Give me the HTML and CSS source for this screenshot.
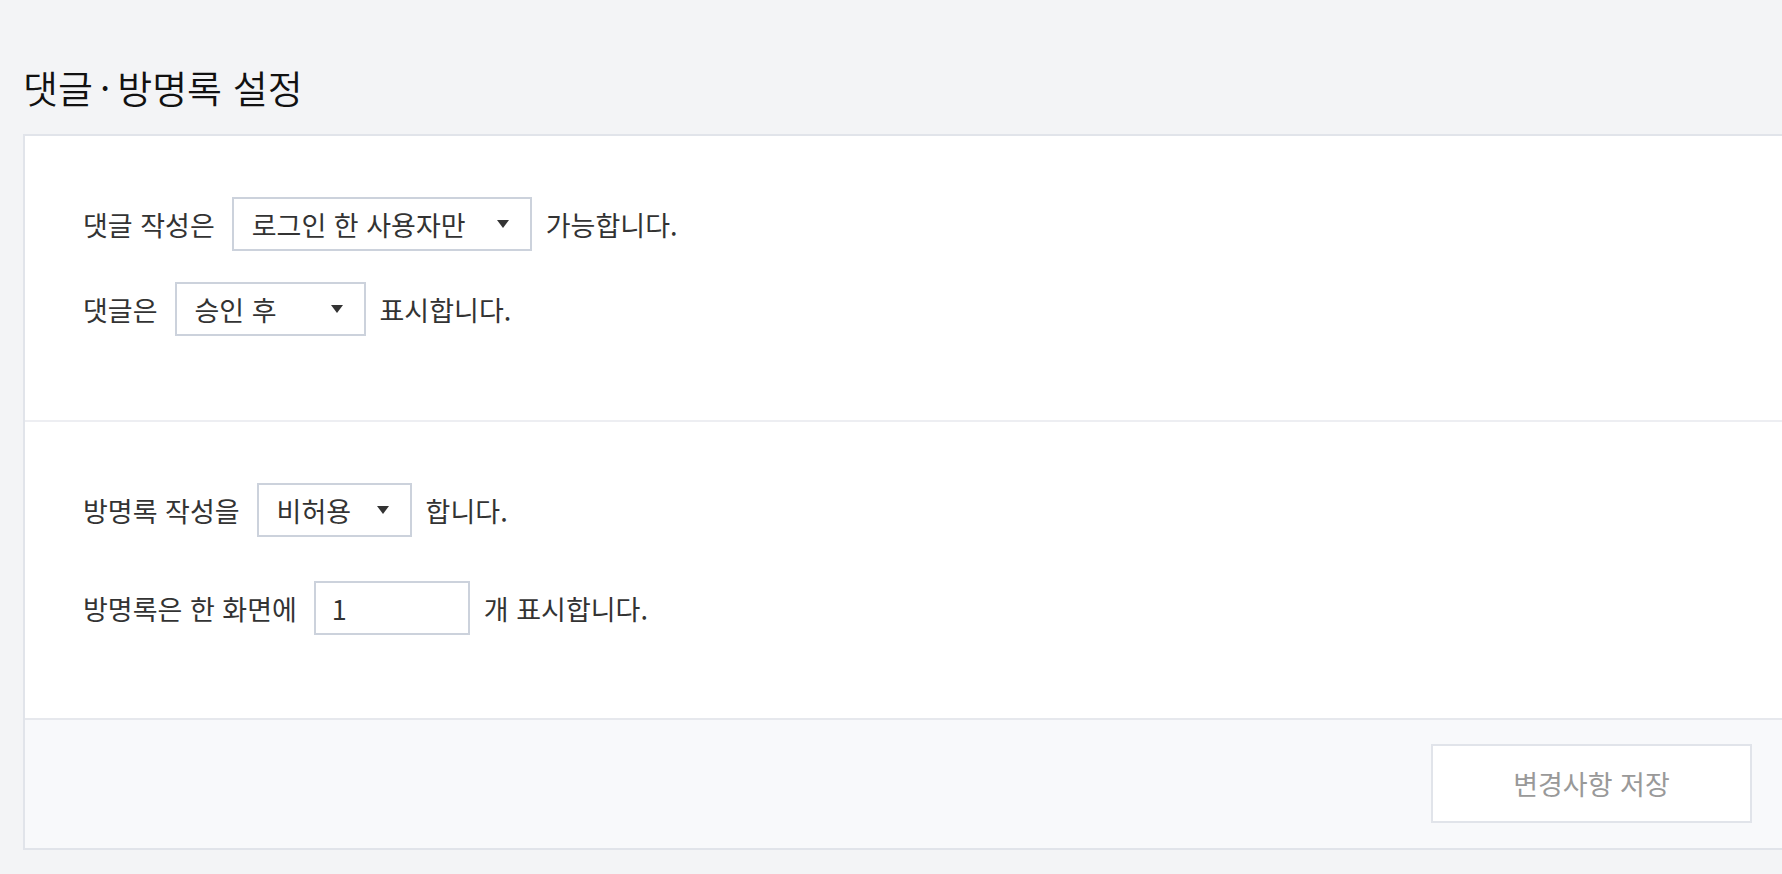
FILE: index.html
```html
<!DOCTYPE html>
<html lang="ko">
<head>
<meta charset="utf-8">
<title>댓글·방명록 설정</title>
<link rel="stylesheet" href="styles.css">
</head>
<body>
<div class="page">
  <h1 class="title">댓글<span class="dot">·</span>방명록 설정</h1>
  <div class="card">
    <div class="section section-first">
      <div class="row">
        <span class="label">댓글 작성은</span>
        <div class="select w300"><span>로그인 한 사용자만</span><i class="caret"></i></div>
        <span class="label">가능합니다.</span>
      </div>
      <div class="row row-gap1">
        <span class="label">댓글은</span>
        <div class="select w191"><span>승인 후</span><i class="caret"></i></div>
        <span class="label">표시합니다.</span>
      </div>
    </div>
    <div class="section section-second">
      <div class="row">
        <span class="label">방명록 작성을</span>
        <div class="select w155"><span>비허용</span><i class="caret"></i></div>
        <span class="label">합니다.</span>
      </div>
      <div class="row row-gap2">
        <span class="label">방명록은 한 화면에</span>
        <div class="input w156">1</div>
        <span class="label">개 표시합니다.</span>
      </div>
    </div>
    <div class="footer">
      <button class="save" type="button">변경사항 저장</button>
    </div>
  </div>
</div>
</body>
</html>
```
FILE: styles.css
```css
html, body {
  margin: 0;
  padding: 0;
}
body {
  background: #f3f4f6;
  font-family: "Noto Sans CJK KR", "Noto Sans", sans-serif;
  color: #333;
  overflow: hidden;
}
.page {
  padding-left: 23px;
  width: 1761px;
}
.title {
  margin: 0;
  padding-top: 60px;
  height: 54px;
  line-height: 54px;
  font-size: 38px;
  font-weight: 350;
  letter-spacing: 0;
  color: #111;
  margin-bottom: 20px;
}
.dot {
  padding: 0 7px;
}
.card {
  background: #fff;
  border: 2px solid #e1e4ea;
}
.section {
  padding-left: 58px;
}
.section-first {
  padding-top: 61px;
  padding-bottom: 84px;
  border-bottom: 2px solid #edeef2;
}
.section-second {
  padding-top: 61px;
  padding-bottom: 83px;
}
.row {
  display: flex;
  align-items: center;
  height: 54px;
  font-size: 27px;
}
.row-gap1 { margin-top: 31px; }
.row-gap2 { margin-top: 44px; }
.label {
  white-space: pre;
}
.select, .input {
  box-sizing: border-box;
  height: 54px;
  border: 2px solid #ccd2dc;
  background: #fff;
  margin: 0 14px 0 17px;
  display: flex;
  align-items: center;
  padding: 0 21px 0 18px;
}
.select {
  justify-content: space-between;
}
.input {
  padding-left: 16px;
}
.w300 { width: 300px; }
.w191 { width: 191px; }
.w155 { width: 155px; }
.w156 { width: 156px; }
.caret {
  width: 0;
  height: 0;
  border-left: 6px solid transparent;
  border-right: 6px solid transparent;
  border-top: 8px solid #333;
}
.footer {
  background: #f8f9fb;
  border-top: 2px solid #e6e8ed;
  padding: 24px 30px 25px 0;
  display: flex;
  justify-content: flex-end;
}
.save {
  box-sizing: border-box;
  width: 321px;
  height: 79px;
  background: #fff;
  border: 2px solid #e1e4ea;
  font-family: "Noto Sans CJK KR", "Noto Sans", sans-serif;
  font-size: 27px;
  color: #999;
  padding: 0;
}
```
